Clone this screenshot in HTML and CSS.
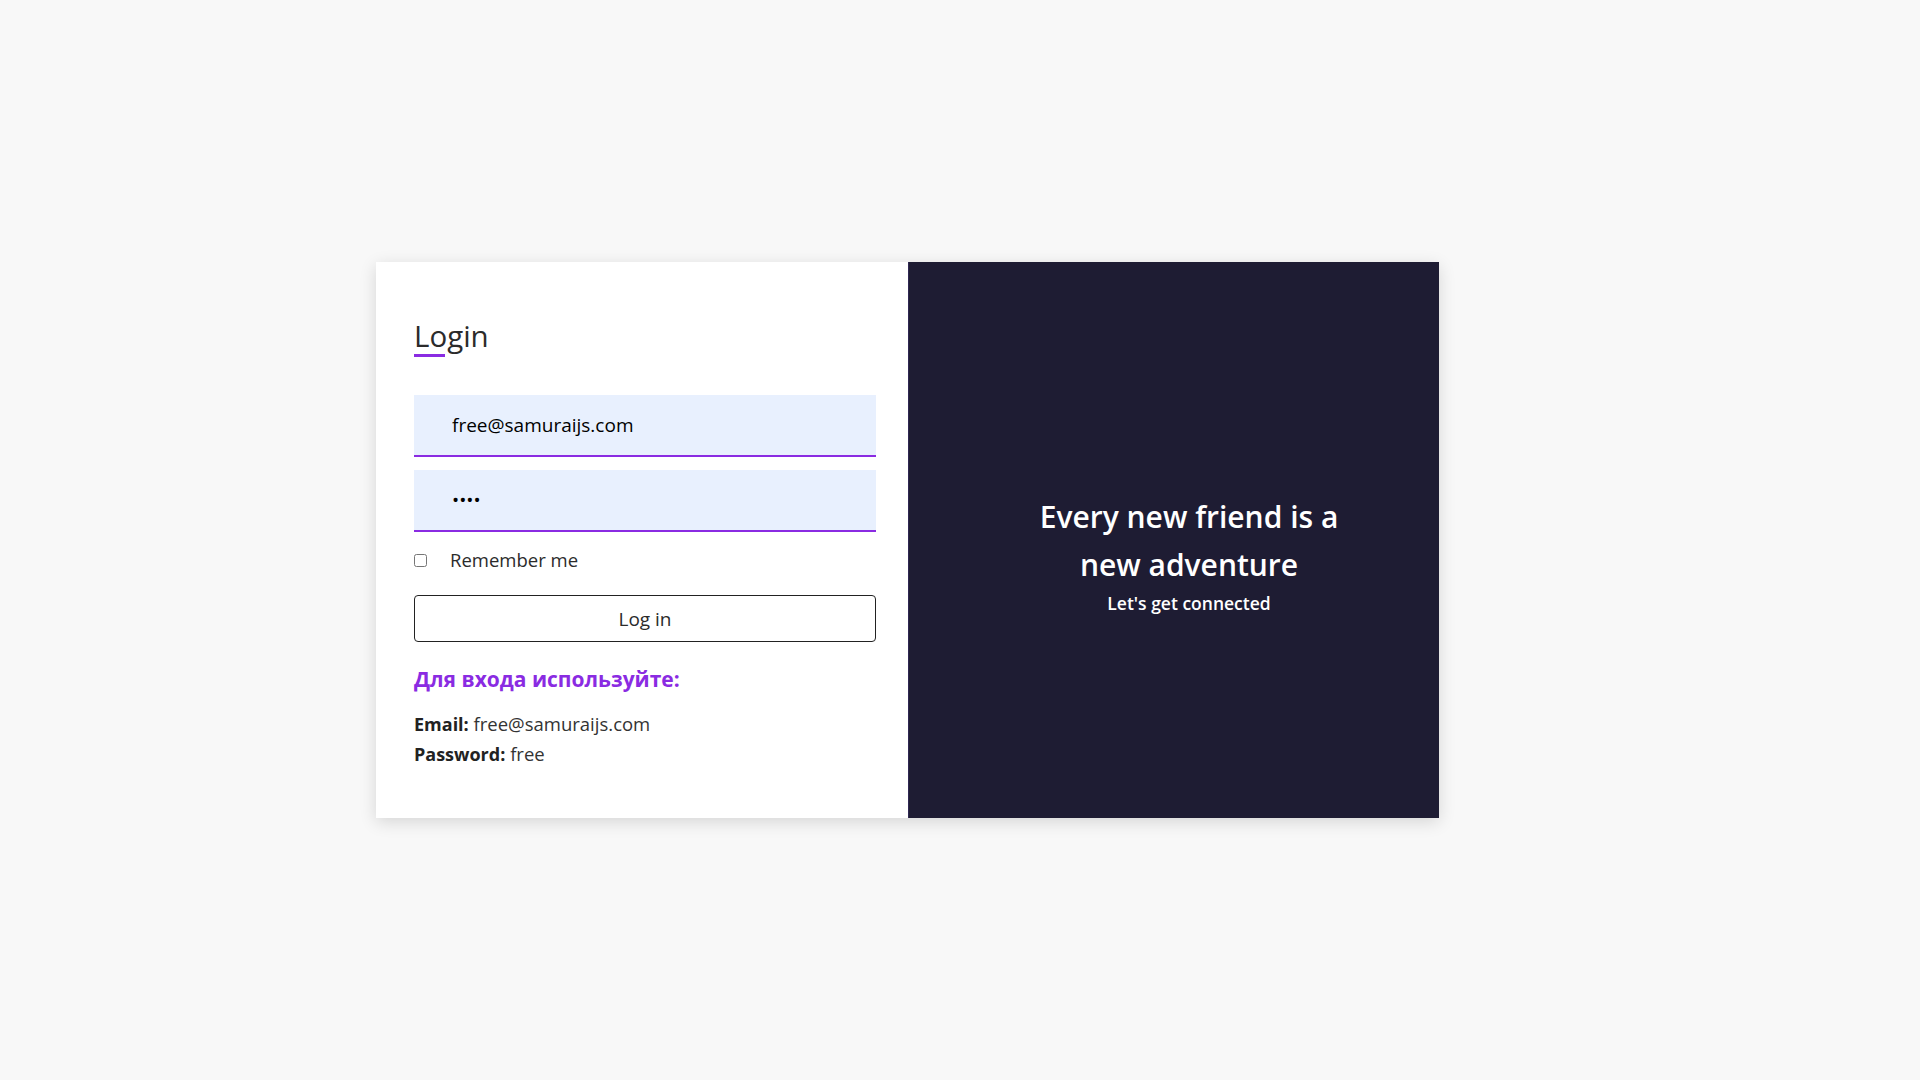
FILE: index.html
```html
<!DOCTYPE html>
<html lang="en">
<head>
<meta charset="utf-8">
<title>Login</title>
<link rel="stylesheet" href="styles.css">
</head>
<body>
<div class="page">
  <div class="container">
    <div class="card">
      <div class="form-side">
        <h1 class="title">Login</h1>
        <div class="title-bar"></div>
        <form class="form">
          <input class="field" type="text" value="free@samuraijs.com">
          <input class="field" type="password" value="free">
          <label class="remember"><input class="check" type="checkbox"><span>Remember me</span></label>
          <button class="btn" type="button">Log in</button>
        </form>
        <h3 class="hint-title">Для входа используйте:</h3>
        <p class="hint"><b>Email:</b> free@samuraijs.com</p>
        <p class="hint"><b>Password:</b> free</p>
      </div>
      <div class="promo-side">
        <h2 class="promo-title">Every new friend is a new adventure</h2>
        <p class="promo-sub">Let's get connected</p>
      </div>
    </div>
  </div>
</div>
</body>
</html>
```

FILE: styles.css
```css
* { box-sizing: border-box; }
html, body { margin: 0; padding: 0; }
body {
  background: #f8f8f8;
  font-family: "Open Sans", "Noto Sans", sans-serif;
  color: #333;
}
.page {
  min-height: 100vh;
  display: flex;
  align-items: center;
  justify-content: center;
}
.container { width: 1168px; }
.card {
  width: 1063px;
  display: flex;
  background: #fff;
  box-shadow: 0 4px 16px rgba(0,0,0,0.14);
}
.form-side {
  flex: 0 0 532px;
  padding: 56px 32px 49px 38px;
}
.title {
  margin: 0;
  font-size: 29.5px;
  line-height: 36px;
  font-weight: 400;
  color: #2b2b2b;
}
.title-bar {
  width: 31px;
  height: 3px;
  background: #8a2be2;
}
.form { display: flex; flex-direction: column; margin-top: 38px; }
.field {
  height: 62px;
  width: 100%;
  border: none;
  border-bottom: 2px solid #8a2be2;
  background: #e8f0fe;
  padding: 0 0 0 38px;
  font-family: inherit;
  font-size: 19px;
  color: #000;
  outline: none;
}
.field + .field { margin-top: 13px; }
.remember {
  display: flex;
  align-items: center;
  height: 24px;
  margin-top: 16px;
  font-size: 18.5px;
  line-height: 24px;
  color: #2b2b2b;
}
.check { width: 13px; height: 13px; margin: 0 23px 0 0; }
.btn {
  margin-top: 23px;
  height: 47px;
  width: 100%;
  background: #fff;
  border: 1px solid #222;
  border-radius: 4px;
  font-family: inherit;
  font-size: 19px;
  color: #2b2b2b;
}
.hint-title {
  margin: 23px 0 16px;
  font-size: 21px;
  line-height: 28px;
  font-weight: 700;
  color: #8a2be2;
}
.hint { margin: 0; font-size: 18.5px; line-height: 30px; color: #333; }
.hint b { color: #222; font-size: 18px; }
.promo-side {
  flex: 1;
  background: #1e1c33;
  border-left: 1px solid #2f2752;
  color: #fff;
  display: flex;
  flex-direction: column;
  align-items: center;
  justify-content: center;
  padding: 27px 0 0 30px;
  text-align: center;
}
.promo-title {
  margin: 0;
  max-width: 340px;
  font-size: 30px;
  line-height: 48px;
  font-weight: 600;
}
.promo-sub { margin: 2px 0 0; font-size: 17.5px; line-height: 24px; font-weight: 600; }
```
